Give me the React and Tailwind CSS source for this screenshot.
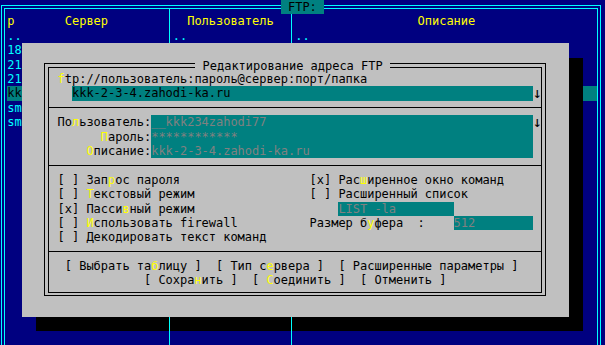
const Y = ({ children }) => <span className="text-[#ffff00]">{children}</span>;
const S = ({ n }) => <span>{" ".repeat(n)}</span>;
const Arrow = () => (
  <span className="block h-[14.4px] w-[7.2px] shrink-0 text-center text-[15px] leading-[14.4px]">↓</span>
);

const Row = ({ children, pl = "pl-[8.7px]" }) => (
  <div className={`flex h-[14.4px] ${pl}`}>{children}</div>
);

const Sep = () => (
  <div className="flex h-[14.4px] items-center">
    <div className="h-px w-full bg-black" />
  </div>
);

const Field = ({ w, children, dim = true }) => (
  <span className={`block h-[14.4px] shrink-0 bg-[#008080] ${w} ${dim ? "text-[#808080]" : "text-black"}`}>{children}</span>
);

export default function App() {
  return (
    <div className="relative h-[345px] w-[605px] overflow-hidden whitespace-pre bg-[#000080] font-['DejaVu_Sans_Mono',monospace] text-[12px] leading-[14.4px] tracking-[-0.024px]">
      {/* background FTP panel */}
      <div className="h-full pl-[1px] pr-[4px] pt-[5px]">
        <div className="h-full border-x border-t border-[#00ffff] px-[2px] pt-[2px]">
          <div className="flex h-full border-x border-t border-[#00ffff]">
            <div className="w-[164px] pt-[5.4px] text-[#00ffff]">
              <div className="h-[14.4px] pl-[2.2px]"><Y>p       Сервер</Y></div>
              <div className="h-[14.4px] pl-[2.2px]">..</div>
              <div className="h-[14.4px] pl-[2.2px]">18</div>
              <div className="h-[14.4px] pl-[2.2px]">21</div>
              <div className="h-[14.4px] pl-[2.2px]">21</div>
              <div className="ml-[2.2px] h-[14.4px] bg-[#008080] text-black">kk</div>
              <div className="h-[14.4px] pl-[2.2px]">sm</div>
              <div className="h-[14.4px] pl-[2.2px]">sm</div>
            </div>
            <div className="relative z-10 w-px shrink-0 bg-[#00ffff]" />
            <div className="w-[121px] pt-[5.4px] text-[#00ffff]">
              <div className="h-[14.4px] pl-[2.8px]"><Y>  Пользователь</Y></div>
              <div className="h-[14.4px] pl-[2.8px]">..</div>
              <div className="h-[43.2px]" />
              <div className="h-[14.4px] bg-[#008080]" />
            </div>
            <div className="relative z-10 w-px shrink-0 bg-[#00ffff]" />
            <div className="flex-1 pt-[5.4px] text-[#00ffff]">
              <div className="h-[14.4px] pl-[3.2px]"><Y>                 Описание</Y></div>
              <div className="h-[14.4px] pl-[3.2px]">..</div>
              <div className="h-[43.2px]" />
              <div className="h-[14.4px] bg-[#008080]" />
            </div>
          </div>
        </div>
      </div>

      {/* panel title */}
      <div className="absolute left-[280.8px] top-0 z-[15] h-[14.4px] bg-[#008080] text-black"> FTP: </div>

      {/* dialog shadow */}
      <div className="absolute left-[36px] top-[57.6px] z-[5] h-[273.6px] w-[547.2px] bg-black" />

      {/* dialog */}
      <div className="absolute left-[21.6px] top-[43.2px] z-20 h-[273.6px] w-[547.2px] bg-[#c0c0c0] px-[22.8px] pt-[20px] text-black">
        <div className="relative border border-black p-[2.5px]">
          <div className="absolute left-[150px] top-[-5.6px] h-[14.4px] bg-[#c0c0c0]"> Редактирование адреса FTP </div>
          <div className="border border-black pb-[4px] pt-[4.3px]">
            <Row><Y>f</Y><span>tp://пользователь:пароль@сервер:порт/папка</span></Row>
            <Row>
              <S n={2} />
              <Field w="w-[460.8px]" dim={false}>kkk-2-3-4.zahodi-ka.ru</Field>
              <Arrow />
            </Row>
            <Sep />
            <Row>
              <span>По</span><Y>л</Y><span>ьзователь:</span>
              <Field w="w-[381.6px]">__kkk234zahodi77</Field><Arrow />
            </Row>
            <Row>
              <S n={6} /><Y>П</Y><span>ароль:</span>
              <Field w="w-[381.6px]">************</Field>
            </Row>
            <Row>
              <S n={4} /><Y>О</Y><span>писание:</span>
              <Field w="w-[381.6px]">kkk-2-3-4.zahodi-ka.ru</Field>
            </Row>
            <Sep />
            <Row>
              <span className="block w-[252px] shrink-0">[ ] Зап<Y>р</Y>ос пароля</span>
              <span>[x] Рас<Y>ш</Y>иренное окно команд</span>
            </Row>
            <Row>
              <span className="block w-[252px] shrink-0">[ ] <Y>Т</Y>екстовый режим</span>
              <span>[ ] Расширенный список</span>
            </Row>
            <Row>
              <span className="block w-[252px] shrink-0">[x] Пасси<Y>в</Y>ный режим</span>
              <span className="block w-[28.8px] shrink-0" />
              <Field w="w-[115.2px]">LIST -la</Field>
            </Row>
            <Row>
              <span className="block w-[252px] shrink-0">[ ] <Y>И</Y>спользовать firewall</span>
              <span className="block w-[144px] shrink-0">Размер б<Y>у</Y>фера  :</span>
              <Field w="w-[79.2px]">512</Field>
            </Row>
            <Row>
              <span>[ ] Декодировать текст команд</span>
            </Row>
            <Sep />
            <Row pl="pl-[15.9px]">
              <span>[ Выбрать та<Y>б</Y>лицу ]  [ Тип с<Y>е</Y>рвера ]  [ Расширенные параметры ]</span>
            </Row>
            <Row pl="pl-[95.1px]">
              <span>[ Сохра<Y>н</Y>ить ]  [ <Y>С</Y>оединить ]  [ Отменить ]</span>
            </Row>
          </div>
        </div>
      </div>
    </div>
  );
}
